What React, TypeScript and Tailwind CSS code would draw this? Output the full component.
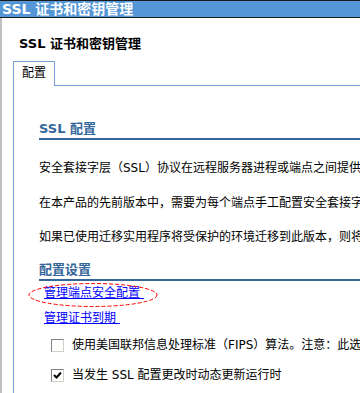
import React from 'react';

const font = 'font-["DejaVu_Sans","Noto_Sans_CJK_SC",sans-serif]';

function Checkbox({ checked = false }: { checked?: boolean }) {
    return (
        <span className="w-[13px] h-[13px] shrink-0 border border-t-[#808080] border-l-[#808080] border-b-[#d4d0c8] border-r-[#d4d0c8] bg-white flex items-center justify-center">
            {checked && (
                <svg width="9" height="9" viewBox="0 0 9 9">
                    <path d="M1 4 L3.5 6.5 L8 1.5" fill="none" stroke="#000" strokeWidth="2" />
                </svg>
            )}
        </span>
    );
}

function SectionTitle({ children }: { children: React.ReactNode }) {
    return (
        <div className="border-b-2 border-[#336699] text-[#336699] font-bold text-[13px] leading-[16px] pb-[1px]">
            {children}
        </div>
    );
}

export default function App() {
    return (
        <div className={`w-[360px] h-[393px] overflow-hidden bg-white flex flex-col text-[12px] text-black ${font}`}>
            {/* 窗口标题栏 */}
            <div className="h-[18px] shrink-0 bg-[#5596d6] border-y border-[#1c1c1c] text-white font-bold text-[14px] leading-[16px] pl-[2px] whitespace-nowrap">
                SSL 证书和密钥管理
            </div>

            <div className="flex-1 border-l-2 border-[#c0c0c0] pl-[11px] flex flex-col">
                <div className="font-bold text-[13px] leading-[16px] pt-[18px] pl-[6px] whitespace-nowrap">
                    SSL 证书和密钥管理
                </div>

                {/* 标签页 */}
                <div className="flex mt-[9px] h-[25px]">
                    <div className="w-[42px] border-t border-x border-[#7b9ed6] pl-[8px] pt-[3px] leading-[16px]">配置</div>
                    <div className="flex-1 border-b border-[#7b9ed6]" />
                </div>

                <div className="flex-1 border-l border-[#7b9ed6] pl-[25px] pt-[35px] whitespace-nowrap">
                    <SectionTitle>SSL 配置</SectionTitle>

                    <p className="mt-[20px] leading-[16px]">安全套接字层（SSL）协议在远程服务器进程或端点之间提供</p>
                    <p className="mt-[19px] leading-[16px]">在本产品的先前版本中，需要为每个端点手工配置安全套接字</p>
                    <p className="mt-[18px] leading-[16px]">如果已使用迁移实用程序将受保护的环境迁移到此版本，则将</p>

                    <div className="mt-[17px]">
                        <SectionTitle>配置设置</SectionTitle>
                    </div>

                    <div className="pl-[5px] mt-[4px] flex flex-col gap-[9px]">
                        <div className="relative leading-[16px]">
                            <a href="#" className="text-[#0000ff] underline">管理端点安全配置&nbsp;</a>
                            <svg className="absolute left-[-16px] top-[-3px]" width="130" height="26" viewBox="0 0 130 26">
                                <ellipse cx="65" cy="13" rx="64" ry="11.5" fill="none" stroke="#ff0000" strokeWidth="1" strokeDasharray="4 2" />
                            </svg>
                        </div>
                        <div className="leading-[16px]">
                            <a href="#" className="text-[#0000ff] underline">管理证书到期&nbsp;</a>
                        </div>
                    </div>

                    <div className="pl-[12px] mt-[11px] flex flex-col gap-[14px]">
                        <label className="flex items-center gap-[8px] leading-[16px]">
                            <Checkbox />
                            <span>使用美国联邦信息处理标准（FIPS）算法。注意：此选</span>
                        </label>
                        <label className="flex items-center gap-[8px] leading-[16px]">
                            <Checkbox checked />
                            <span>当发生 SSL 配置更改时动态更新运行时</span>
                        </label>
                    </div>
                </div>
            </div>
        </div>
    );
}
